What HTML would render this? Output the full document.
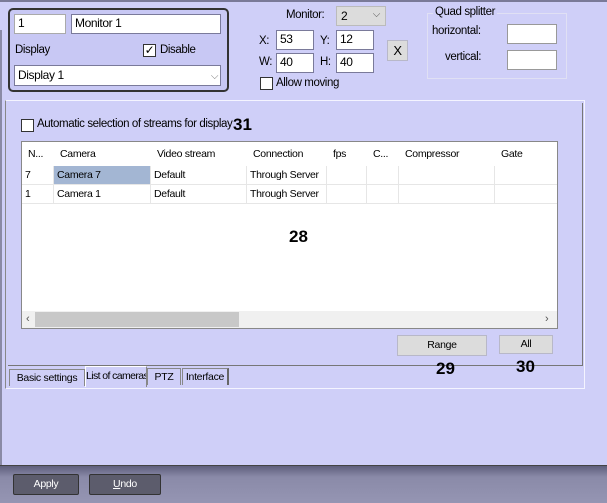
<!DOCTYPE html>
<html><head><style>
*{box-sizing:border-box}
body{margin:0;width:607px;height:503px;background:#cfcff8;font-family:"Liberation Sans",sans-serif;font-size:10.5px;letter-spacing:-0.3px;color:#000;position:relative;overflow:hidden;white-space:nowrap}
.a{position:absolute}
.inp{position:absolute;background:#fff;border:1px solid #7a7a9a;padding:1px 3px;font-size:12px;line-height:15px;letter-spacing:-0.4px}
.lbl{position:absolute;font-size:11.5px;letter-spacing:-0.4px}
.cb{position:absolute;width:13px;height:13px;border:1px solid #333;background:#fff}
.btn{position:absolute;background:#dcdcdc;border:1px solid #b8b8c8;text-align:center}
.num{position:absolute;font-weight:bold;font-size:17px;letter-spacing:0}
.th{position:absolute;top:0;height:24px;line-height:24px;padding-left:6px}
.cell{position:absolute;height:19px;line-height:19px;padding-left:3px;border-right:1px solid #e6e6e6;border-bottom:1px solid #e6e6e6;overflow:hidden}
.tab{position:absolute;top:368px;height:17px;border:1px solid #888;border-bottom:none;background:#cfcff8;line-height:16px;text-align:center;overflow:hidden}
</style></head><body>
<div class="a" style="left:0;top:0;width:607px;height:2px;background:#7a7a98"></div>
<div class="a" style="left:0;top:30px;width:2px;height:436px;background:#8a8aa6"></div>
<div class="a" style="left:8px;top:8px;width:221px;height:84px;border:2px solid #333;border-radius:5px;background:#c8c8f4"></div>
<div class="inp" style="left:14px;top:14px;width:52px;height:20px;border-color:#aaa">1</div>
<div class="inp" style="left:71px;top:14px;width:150px;height:20px">Monitor 1</div>
<div class="lbl" style="left:15px;top:44px">Display</div>
<div class="cb" style="left:143px;top:44px;font-size:12px;line-height:10px;text-align:center">✓</div>
<div class="lbl" style="left:160px;top:44px">Disable</div>
<div class="inp" style="left:14px;top:65px;width:207px;height:21px;line-height:17px">Display 1<span style="position:absolute;right:2px;top:2px;color:#777;font-size:10px">⌵</span></div>

<div class="lbl" style="left:286px;top:9px">Monitor:</div>
<div class="a" style="left:336px;top:6px;width:50px;height:20px;background:#dcdcdc;border:1px solid #bbb;font-size:12px;padding:2px 4px">2<span style="position:absolute;right:5px;top:2px;color:#555;font-size:10px">⌵</span></div>
<div class="lbl" style="left:259px;top:35px">X:</div>
<div class="inp" style="left:276px;top:30px;width:38px;height:20px">53</div>
<div class="lbl" style="left:320px;top:35px">Y:</div>
<div class="inp" style="left:336px;top:30px;width:38px;height:20px">12</div>
<div class="btn" style="left:387px;top:40px;width:21px;height:21px;font-size:13px;line-height:19px">X</div>
<div class="lbl" style="left:259px;top:56px">W:</div>
<div class="inp" style="left:276px;top:53px;width:38px;height:20px">40</div>
<div class="lbl" style="left:320px;top:56px">H:</div>
<div class="inp" style="left:336px;top:53px;width:38px;height:20px">40</div>
<div class="cb" style="left:260px;top:77px"></div>
<div class="lbl" style="left:276px;top:77px">Allow moving</div>
<div class="a" style="left:427px;top:13px;width:140px;height:66px;border:1px solid #e0e0f4"></div>
<div class="lbl" style="left:433px;top:6px;background:#cfcff8;padding:0 2px">Quad splitter</div>
<div class="lbl" style="left:432px;top:25px">horizontal:</div>
<div class="inp" style="left:507px;top:24px;width:50px;height:20px;border-color:#999"></div>
<div class="lbl" style="left:445px;top:51px">vertical:</div>
<div class="inp" style="left:507px;top:50px;width:50px;height:20px;border-color:#999"></div>

<div class="a" style="left:5px;top:100px;width:580px;height:289px;border:1px solid #f4f4ff;border-left-color:#888"></div>
<div class="a" style="left:8px;top:103px;width:575px;height:263px;border:1px solid #777;border-top:none;border-left:none"></div>
<div class="cb" style="left:21px;top:119px"></div>
<div class="a" style="left:37px;top:118px;font-size:11.5px;letter-spacing:-0.4px">Automatic selection of streams for display</div>
<div class="num" style="left:233px;top:115px">31</div>

<div class="a" style="left:21px;top:141px;width:537px;height:188px;background:#fff;border:1px solid #888">
 <div class="th" style="left:0">N...</div>
 <div class="th" style="left:32px">Camera</div>
 <div class="th" style="left:129px">Video stream</div>
 <div class="th" style="left:225px">Connection</div>
 <div class="th" style="left:305px">fps</div>
 <div class="th" style="left:345px">C...</div>
 <div class="th" style="left:377px">Compressor</div>
 <div class="th" style="left:473px">Gate</div>
 <div class="cell" style="left:0;top:24px;width:32px">7</div>
 <div class="cell" style="left:32px;top:24px;width:97px;background:#a3b6d3">Camera 7</div>
 <div class="cell" style="left:129px;top:24px;width:96px">Default</div>
 <div class="cell" style="left:225px;top:24px;width:80px">Through Server</div>
 <div class="cell" style="left:305px;top:24px;width:40px"></div>
 <div class="cell" style="left:345px;top:24px;width:32px"></div>
 <div class="cell" style="left:377px;top:24px;width:96px"></div>
 <div class="cell" style="left:473px;top:24px;width:62px;border-right:none"></div>
 <div class="cell" style="left:0;top:43px;width:32px">1</div>
 <div class="cell" style="left:32px;top:43px;width:97px">Camera 1</div>
 <div class="cell" style="left:129px;top:43px;width:96px">Default</div>
 <div class="cell" style="left:225px;top:43px;width:80px">Through Server</div>
 <div class="cell" style="left:305px;top:43px;width:40px"></div>
 <div class="cell" style="left:345px;top:43px;width:32px"></div>
 <div class="cell" style="left:377px;top:43px;width:96px"></div>
 <div class="cell" style="left:473px;top:43px;width:62px;border-right:none"></div>
 <div class="a" style="left:0;top:169px;width:535px;height:17px;background:#f0f0f0"></div>
 <div class="a" style="left:13px;top:170px;width:204px;height:15px;background:#c8c8c8"></div>
 <div class="a" style="left:4px;top:169px;color:#555;font-size:11px;line-height:17px">&lsaquo;</div>
 <div class="a" style="left:523px;top:169px;color:#555;font-size:11px;line-height:17px">&rsaquo;</div>
</div>
<div class="num" style="left:289px;top:227px">28</div>

<div class="btn" style="left:397px;top:335px;width:90px;height:21px;line-height:19px">Range</div>
<div class="btn" style="left:499px;top:335px;width:54px;height:19px;line-height:17px">All</div>
<div class="num" style="left:436px;top:359px">29</div>
<div class="num" style="left:516px;top:357px">30</div>

<div class="tab" style="left:9px;width:76px;top:369px">Basic settings</div>
<div class="tab" style="left:85px;width:62px;top:366px;height:21px;border-color:#fff;border-right-color:#888;line-height:18px;letter-spacing:-0.6px">List of cameras</div>
<div class="tab" style="left:147px;width:34px">PTZ</div>
<div class="tab" style="left:182px;width:47px;border-right:2px solid #666">Interface</div>

<div class="a" style="left:0;top:465px;width:607px;height:38px;background:linear-gradient(#5f5f7c,#8a8aa8 30%,#9595b3);border-top:1px solid #444"></div>
<div class="a" style="left:13px;top:474px;width:66px;height:21px;background:#5c5c6c;border:1px solid #333;border-radius:2px;color:#fff;text-align:center;line-height:19px">Apply</div>
<div class="a" style="left:89px;top:474px;width:72px;height:21px;background:#5c5c6c;border:1px solid #333;border-radius:2px;color:#fff;text-align:center;line-height:19px"><u>U</u>ndo</div>
</body></html>
